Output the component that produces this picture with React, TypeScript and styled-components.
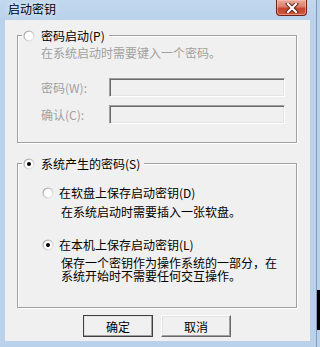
import React from 'react';
import styled, { createGlobalStyle } from 'styled-components';

const GlobalStyle = createGlobalStyle`
    html, body {
        margin: 0;
        padding: 0;
        background: #b9d1ea;
    }
`;

const Window = styled.div`
    width: 320px;
    height: 347px;
    display: flex;
    background: #b9d1ea;
    font-family: 'Noto Sans CJK SC', 'Liberation Sans', sans-serif;
    font-size: 12px;
    color: #000;
    overflow: hidden;
`;

const Frame = styled.div`
    width: 316px;
    display: flex;
    flex-direction: column;
    background: linear-gradient(to bottom, #c2d8ef 0, #b9d1ea 20px);
`;

const Edge = styled.div`
    width: 1px;
    background: #7f9db9;
`;

const Beyond = styled.div`
    width: 3px;
    background: linear-gradient(to bottom, #b9d1ea 0 290px, #000 290px 330px, #b9d1ea 330px);
`;

const TitleBar = styled.div`
    height: 20px;
    display: flex;
    justify-content: space-between;
    align-items: flex-start;
    padding: 0 9px 0 8px;
    box-sizing: border-box;
`;

const Caption = styled.div`
    line-height: 16px;
    margin-top: 1px;
    font-size: 12px;
    text-shadow: 0 0 6px rgba(255, 255, 255, 0.9);
`;

const CloseButton = styled.div`
    width: 31px;
    height: 16px;
    box-sizing: border-box;
    border: 1px solid #6e2418;
    border-top: none;
    border-radius: 0 0 4px 4px;
    background: linear-gradient(to bottom, #e9a99a 0%, #d9806c 45%, #c4452d 55%, #cf5a40 100%);
    box-shadow: inset 0 0 0 1px rgba(255, 200, 190, 0.5);
    display: flex;
    align-items: center;
    justify-content: center;
`;

const Client = styled.div`
    margin-left: 5px;
    width: 305px;
    height: 321px;
    background: #f0f0f0;
    display: flex;
    flex-direction: column;
`;

const Group = styled.fieldset<{ $top: number; $height: number }>`
    margin: ${(p) => p.$top}px 0 0 12px;
    padding: 0;
    width: 280px;
    height: ${(p) => p.$height}px;
    box-sizing: border-box;
    border: 1px solid #a0a0a0;
    box-shadow: 1px 1px 0 #fff, inset 1px 1px 0 #fff;
    min-width: 0;
`;

const Legend = styled.legend`
    margin-left: 4px;
    padding: 0 4px 0 1px;
    height: 13px;
    display: flex;
    align-items: center;
    gap: 6px;
    line-height: 13px;
    background: #f0f0f0;
`;

const Text = styled.div<{ $indent: number; $top: number; $muted?: boolean }>`
    margin: ${(p) => p.$top}px 0 0 ${(p) => p.$indent}px;
    height: 13px;
    line-height: 13px;
    color: ${(p) => (p.$muted ? '#a0a0a0' : '#000')};
    white-space: nowrap;
`;

const Option = styled.div<{ $top: number }>`
    margin: ${(p) => p.$top}px 0 0 24px;
    height: 13px;
    display: flex;
    align-items: center;
    gap: 5px;
    line-height: 13px;
`;

const FieldRow = styled.div<{ $top: number }>`
    margin: ${(p) => p.$top}px 0 0 23px;
    display: flex;
    align-items: center;
`;

const FieldLabel = styled.span`
    width: 68px;
    color: #a0a0a0;
    line-height: 13px;
`;

const Input = styled.div`
    width: 176px;
    height: 19px;
    box-sizing: border-box;
    background: #f0f0f0;
    border-top: 1px solid #a0a0a0;
    border-left: 1px solid #a0a0a0;
    border-right: 1px solid #fff;
    border-bottom: 1px solid #fff;
    box-shadow: inset 1px 1px 0 #696969, inset -1px -1px 0 #e3e3e3;
`;

const ButtonRow = styled.div`
    margin: 7px 0 0 78px;
    display: flex;
    gap: 8px;
`;

const Button = styled.div<{ $default?: boolean }>`
    width: 70px;
    height: 22px;
    box-sizing: border-box;
    display: flex;
    align-items: center;
    justify-content: center;
    background: #f0f0f0;
    border-top: 1px solid #fff;
    border-left: 1px solid #fff;
    border-right: 1px solid #696969;
    border-bottom: 1px solid #696969;
    box-shadow: inset -1px -1px 0 #a0a0a0, inset 1px 1px 0 #e3e3e3;
    outline: ${(p) => (p.$default ? '1px solid #404040' : 'none')};
    outline-offset: -1px;
    line-height: 13px;
    font-size: 12px;
`;

const Radio = ({ checked }: { checked?: boolean }) => (
    <svg width="12" height="12" viewBox="0 0 12 12" style={{ flex: 'none' }}>
        <defs>
            <linearGradient id="rg" x1="0" y1="0" x2="1" y2="1">
                <stop offset="0" stopColor="#9a9a9a" />
                <stop offset="0.5" stopColor="#c8c8c8" />
                <stop offset="1" stopColor="#f4f4f4" />
            </linearGradient>
        </defs>
        <circle cx="6" cy="6" r="5.5" fill="url(#rg)" />
        <circle cx="6" cy="6" r="4.3" fill="#fff" />
        {checked && <circle cx="6" cy="6" r="2" fill="#000" />}
    </svg>
);

const CloseGlyph = () => (
    <svg width="14" height="10" viewBox="0 0 14 10">
        <path d="M3 1 L11 9 M11 1 L3 9" stroke="#5a1a10" strokeWidth="4" strokeLinecap="square" />
        <path d="M3 1 L11 9 M11 1 L3 9" stroke="#fff" strokeWidth="2.2" strokeLinecap="square" />
    </svg>
);

const App = (): JSX.Element => {
    return (
        <>
            <GlobalStyle />
            <Window>
                <Frame>
                    <TitleBar>
                        <Caption>启动密钥</Caption>
                        <CloseButton>
                            <CloseGlyph />
                        </CloseButton>
                    </TitleBar>
                    <Client>
                        <Group $top={9} $height={114}>
                            <Legend>
                                <Radio />
                                <span>密码启动(P)</span>
                            </Legend>
                            <Text $indent={23} $top={4} $muted>
                                在系统启动时需要键入一个密码。
                            </Text>
                            <FieldRow $top={19}>
                                <FieldLabel>密码(W):</FieldLabel>
                                <Input />
                            </FieldRow>
                            <FieldRow $top={8}>
                                <FieldLabel>确认(C):</FieldLabel>
                                <Input />
                            </FieldRow>
                        </Group>
                        <Group $top={14} $height={151}>
                            <Legend>
                                <Radio checked />
                                <span>系统产生的密码(S)</span>
                            </Legend>
                            <Option $top={16}>
                                <Radio />
                                <span>在软盘上保存启动密钥(D)</span>
                            </Option>
                            <Text $indent={43} $top={6}>
                                在系统启动时需要插入一张软盘。
                            </Text>
                            <Option $top={20}>
                                <Radio checked />
                                <span>在本机上保存启动密钥(L)</span>
                            </Option>
                            <Text $indent={43} $top={5}>
                                保存一个密钥作为操作系统的一部分，在
                            </Text>
                            <Text $indent={43} $top={0}>
                                系统开始时不需要任何交互操作。
                            </Text>
                        </Group>
                        <ButtonRow>
                            <Button $default>确定</Button>
                            <Button>取消</Button>
                        </ButtonRow>
                    </Client>
                </Frame>
                <Edge />
                <Beyond />
            </Window>
        </>
    );
};

export default App;
